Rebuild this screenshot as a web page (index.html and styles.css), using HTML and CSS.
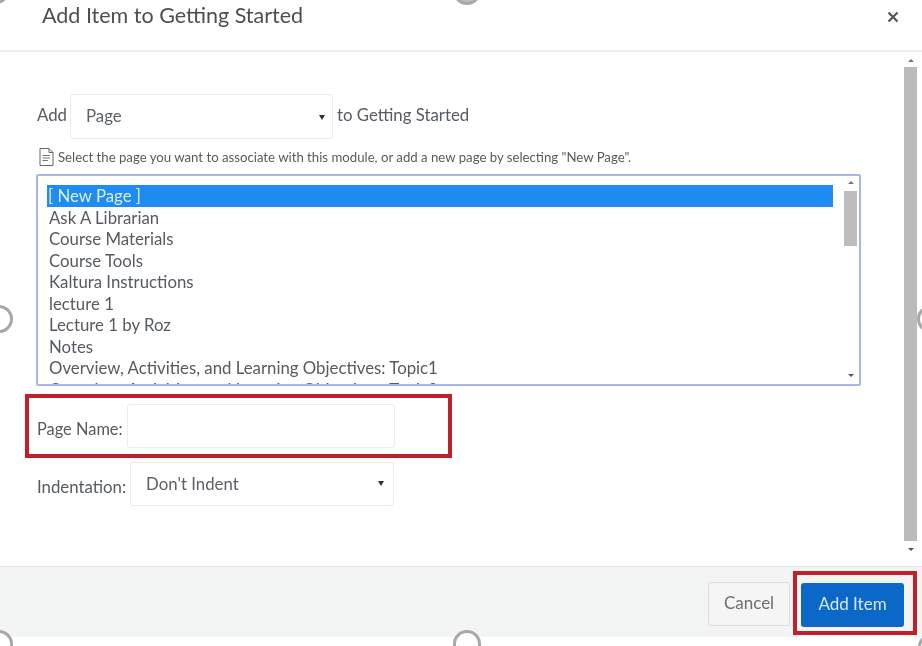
FILE: index.html
```html
<!DOCTYPE html>
<html lang="en">
<head>
  <meta charset="UTF-8">
  <title>Add Item to Getting Started</title>
  <link rel="stylesheet" href="styles.css">
</head>
<body>
  <div class="modal">
    <!-- Header -->
    <header class="modal-header">
      <h1>Add Item to Getting Started</h1>
      <svg class="close-icon" width="12" height="12" viewBox="0 0 12 12">
        <path d="M1.5 1.5 L10.5 10.5 M10.5 1.5 L1.5 10.5" stroke="#555" stroke-width="2.2"/>
      </svg>
    </header>

    <!-- Scrolling body -->
    <div class="modal-body">
      <div class="content">
        <div class="add-row">
          <span>Add</span>
          <div class="select-box add-select">
            <select><option>Page</option></select>
          </div>
          <span class="to-label">to Getting Started</span>
        </div>

        <div class="help-row">
          <svg class="page-icon" width="15" height="20" viewBox="0 0 15 20">
            <path d="M1 1.5 H10 L14 5.5 V18.5 H1 Z M10 1.5 V5.5 H14" fill="#fff" stroke="#666" stroke-width="1"/>
            <path d="M3.5 8.5 H11 M3.5 11 H11 M3.5 13.5 H9" stroke="#777" stroke-width="1"/>
          </svg>
          <span>Select the page you want to associate with this module, or add a new page by selecting "New Page".</span>
        </div>

        <div class="list-box">
          <ul class="page-list">
            <li class="selected">[ New Page ]</li>
            <li>Ask A Librarian</li>
            <li>Course Materials</li>
            <li>Course Tools</li>
            <li>Kaltura Instructions</li>
            <li>lecture 1</li>
            <li>Lecture 1 by Roz</li>
            <li>Notes</li>
            <li>Overview, Activities, and Learning Objectives: Topic1</li>
            <li>Overview, Activities, and Learning Objectives: Topic2</li>
          </ul>
          <div class="scrollbar list-scroll">
            <i class="arrow-up"></i>
            <div class="track"><div class="thumb list-thumb"></div></div>
            <i class="arrow-down"></i>
          </div>
        </div>

        <div class="name-row">
          <label for="pageName">Page Name:</label>
          <input type="text" id="pageName">
        </div>

        <div class="indent-row">
          <span>Indentation:</span>
          <div class="select-box indent-select">
            <select><option>Don't Indent</option></select>
          </div>
        </div>
      </div>

      <div class="scrollbar body-scroll">
        <i class="arrow-up"></i>
        <div class="track"><div class="thumb body-thumb"></div></div>
        <i class="arrow-down"></i>
      </div>
    </div>

    <!-- Footer -->
    <footer class="modal-footer">
      <button class="btn cancel">Cancel</button>
      <div class="highlight-btn">
        <button class="btn primary">Add Item</button>
      </div>
    </footer>
  </div>

  <!-- Crop handles over the picture edges -->
  <span class="handle top-left"></span>
  <span class="handle top-mid"></span>
  <span class="handle mid-left"></span>
  <span class="handle mid-right"></span>
  <span class="handle bottom-left"></span>
  <span class="handle bottom-mid"></span>
  <span class="handle bottom-right"></span>
</body>
</html>
```

FILE: styles.css
```css
/* Global Styles */
html, body {
  margin: 0;
  padding: 0;
  height: 100%;
  overflow: hidden;
  background-color: #fff;
}

body {
  position: relative;
  font-family: Lato, "Open Sans", sans-serif;
  font-size: 16.8px;
  color: #555b60;
}

.modal {
  width: 922px;
  height: 637px;
  display: flex;
  flex-direction: column;
  filter: blur(0.7px);
}

/* Header */
.modal-header {
  height: 52px;
  flex: none;
  box-sizing: border-box;
  border-bottom: 2px solid #eeeeee;
  padding: 0 23px 0 42px;
  display: flex;
  justify-content: space-between;
  align-items: flex-start;
}

.modal-header h1 {
  margin: 2px 0 0;
  font-size: 21.5px;
  line-height: 27px;
  font-weight: 400;
  color: #4a4f54;
}

.close-icon {
  margin-top: 11px;
}

/* Body */
.modal-body {
  flex: 1;
  display: flex;
  min-height: 0;
}

.content {
  flex: 1;
  padding: 42px 0 0 25px;
}

.add-row {
  display: flex;
  align-items: flex-start;
  margin-left: 12px;
  height: 45px;
}

.add-row span {
  line-height: 41px;
}

.to-label {
  margin-left: 4px;
}

.select-box {
  position: relative;
  box-sizing: border-box;
  height: 45px;
  border: 1px solid #ececec;
  border-radius: 3px;
  background-color: #fff;
}

.select-box::after {
  content: "";
  position: absolute;
  right: 9px;
  top: 20px;
  border-left: 3px solid transparent;
  border-right: 3px solid transparent;
  border-top: 5px solid #333;
}

.select-box select {
  appearance: none;
  width: 100%;
  height: 100%;
  border: none;
  background: none;
  font-family: inherit;
  color: #5c6166;
  font-size: 16.8px;
}

.add-select {
  width: 263px;
  margin-left: 3px;
}

.add-select::after {
  right: 7px;
}

.add-select select {
  padding: 0 0 2px 15px;
}

.help-row {
  display: flex;
  align-items: flex-start;
  margin: 8px 0 0 14px;
  height: 27px;
  font-size: 13.2px;
  line-height: 20px;
  white-space: nowrap;
}

.page-icon {
  margin-right: 4px;
  flex: none;
}

.list-box {
  width: 825px;
  height: 212px;
  margin-left: 11px;
  box-sizing: border-box;
  border: 2px solid #a9b6e4;
  border-radius: 2px;
  background-color: #fff;
  display: flex;
  overflow: hidden;
}

.page-list {
  list-style: none;
  margin: 0;
  padding: 9px 0 0 9px;
  width: 786px;
  flex: none;
  line-height: 21.5px;
}

.page-list li {
  padding-left: 2px;
  white-space: nowrap;
}

.page-list .selected {
  padding-left: 1px;
  background-color: #1e8cf0;
  color: #dbeeff;
}

/* Scrollbars */
.scrollbar {
  display: flex;
  flex-direction: column;
  align-items: center;
  flex: none;
}

.track {
  flex: 1;
  width: 100%;
}

.thumb {
  background-color: #bdbdbd;
}

.arrow-up,
.arrow-down {
  width: 0;
  height: 0;
  flex: none;
  border-left: 3px solid transparent;
  border-right: 3px solid transparent;
}

.arrow-up {
  border-bottom: 3px solid #777;
}

.arrow-down {
  border-top: 3px solid #555;
}

.list-scroll {
  width: 13px;
  margin-left: 11px;
  padding: 5px 0 7px;
  box-sizing: border-box;
}

.list-scroll .track {
  margin: 7px 0 4px;
}

.list-thumb {
  height: 55px;
}

.body-scroll {
  width: 13px;
  margin-right: 5px;
  padding: 7px 0 15px;
  box-sizing: border-box;
}

.body-scroll .track {
  margin: 5px 0 7px;
}

.body-thumb {
  height: 100%;
  background-color: #bbbbbb;
}

/* Page name row with its red highlight */
.name-row {
  width: 427px;
  height: 64px;
  margin-top: 8px;
  box-sizing: border-box;
  border: 4px solid #c21f2c;
  display: flex;
  align-items: flex-start;
  padding: 6px 0 0 8px;
}

.name-row label {
  font-size: 16.4px;
  line-height: 50px;
  white-space: nowrap;
}

.name-row input {
  width: 268px;
  height: 44px;
  box-sizing: border-box;
  margin: 0 0 0 4px;
  border: 1px solid #ececec;
  border-radius: 3px;
  outline: none;
}

.indent-row {
  display: flex;
  margin: 4px 0 0 12px;
}

.indent-row span {
  line-height: 50px;
}

.indent-select {
  width: 264px;
  height: 44px;
  margin-left: 4px;
}

.indent-select select {
  padding: 0 0 2px 15px;
}

.indent-select::after {
  top: 18px;
}

/* Footer */
.modal-footer {
  height: 71px;
  flex: none;
  box-sizing: border-box;
  border-top: 1px solid #e2e2e2;
  background-color: #f3f4f4;
  display: flex;
  justify-content: flex-end;
  align-items: flex-start;
  padding: 4px 5px 0 0;
}

.btn {
  height: 44px;
  border-radius: 3px;
  font-family: inherit;
  font-size: 17px;
  padding: 0 0 3px;
}

.cancel {
  width: 82px;
  margin: 11px 3px 0 0;
  background-color: #f5f5f5;
  border: 1px solid #dcdcdc;
  color: #6b7075;
}

.highlight-btn {
  width: 124px;
  height: 64px;
  box-sizing: border-box;
  border: 4px solid #c21f2c;
  padding: 8px 0 0 4px;
}

.primary {
  width: 103px;
  background-color: #0b68c9;
  border: none;
  color: #d5e8fb;
}

/* Crop handles */
.handle {
  position: absolute;
  width: 22px;
  height: 22px;
  border: 3px solid #a8a8a8;
  border-radius: 50%;
  background-color: #fff;
}

.top-left { left: -18px; top: -24px; background-color: #bbb; }
.top-mid { left: 453px; top: -23px; background-color: #bbb; }
.mid-left { left: -15px; top: 305px; }
.mid-right { left: 917px; top: 305px; }
.bottom-left { left: -15px; top: 630px; }
.bottom-mid { left: 453px; top: 630px; }
.bottom-right { left: 918px; top: 633px; }
```
